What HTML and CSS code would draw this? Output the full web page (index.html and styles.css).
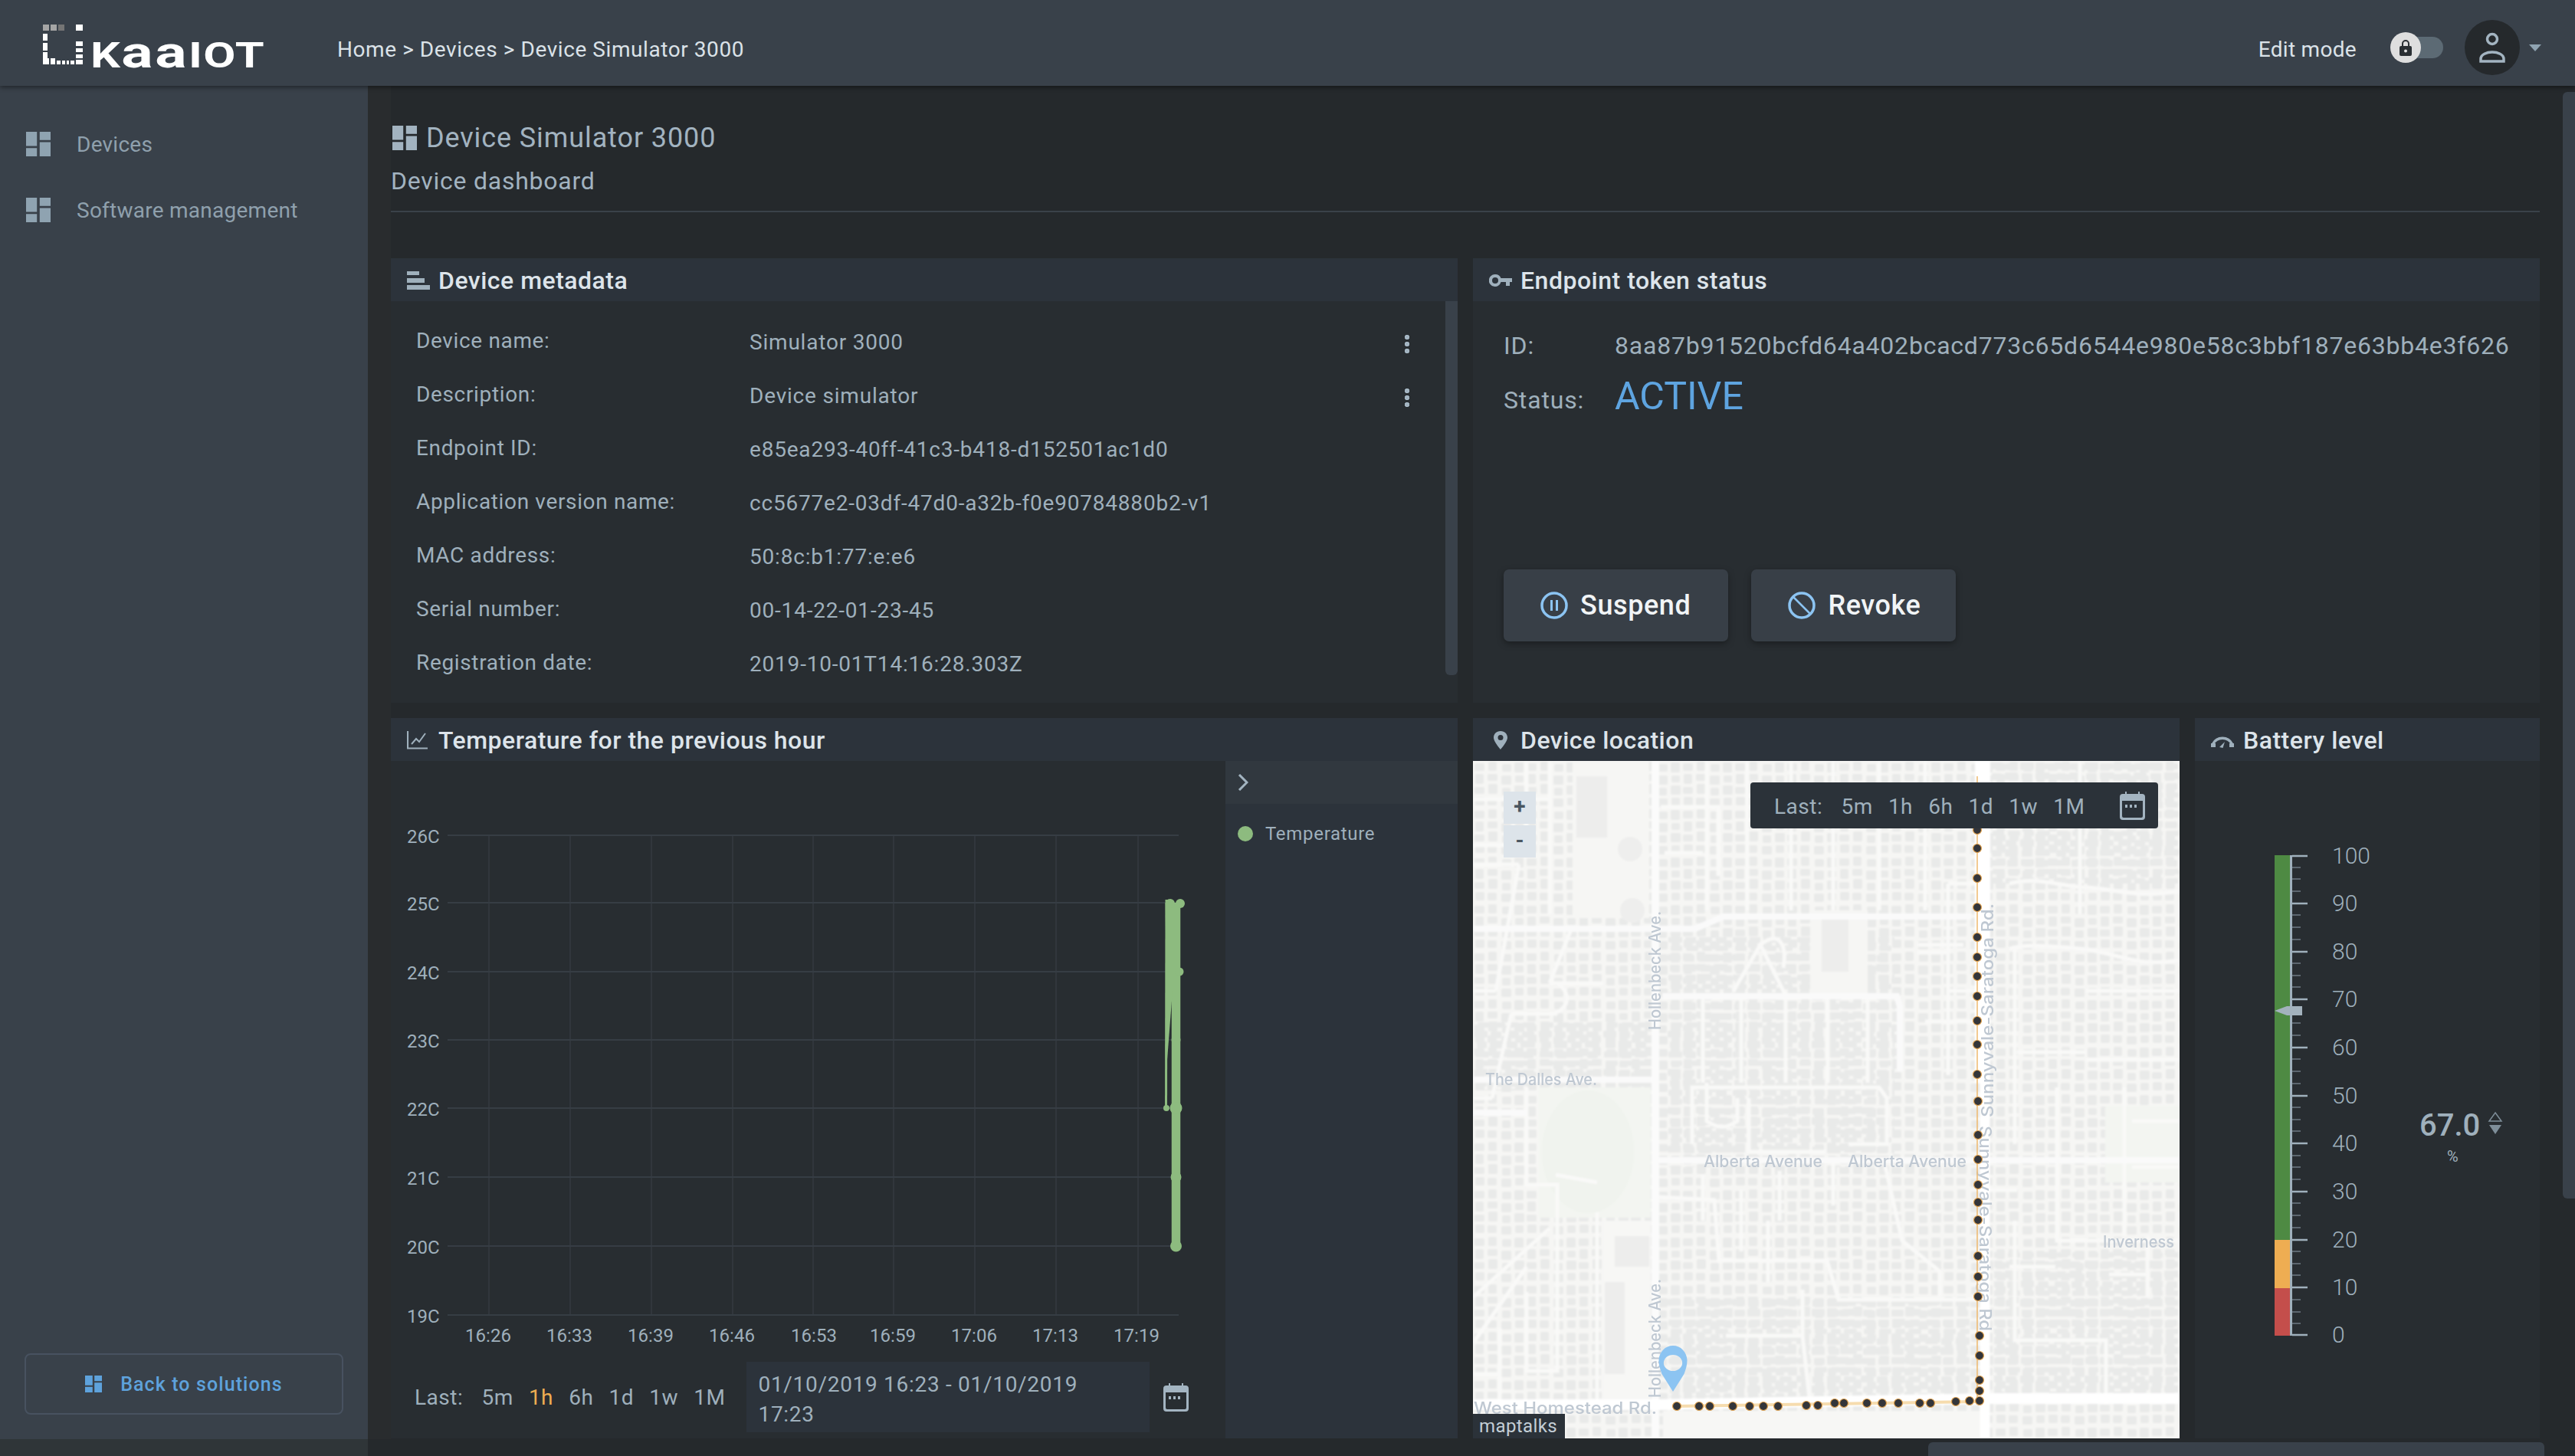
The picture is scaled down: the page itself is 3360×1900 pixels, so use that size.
FILE: index.html
```html
<!DOCTYPE html>
<html lang="en">
<head>
<meta charset="utf-8">
<title>Device Simulator 3000</title>
<link rel="stylesheet" href="styles.css">
</head>
<body>
<svg class="defs" width="0" height="0" aria-hidden="true">
  <symbol id="i-dash" viewBox="3 3 18 18"><path d="M3 13.4h8V3H3zm0 7.6h8v-6H3zm10 0h8V10.6h-8zM13 3v6h8V3z"/></symbol>
  <symbol id="i-cal" viewBox="0 0 33 37"><path fill-rule="evenodd" d="M4 3h3V0h2v3h15V0h2v3h3a4 4 0 0 1 4 4v26a4 4 0 0 1-4 4H4a4 4 0 0 1-4-4V7a4 4 0 0 1 4-4zM3 12v20a2 2 0 0 0 2 2h23a2 2 0 0 0 2-2V12zm4 5h3v4H7zm6 0h3v4h-3zm6 0h3v4h-3z"/></symbol>
</svg>

<header class="topbar">
  <div class="logo">
    <svg class="logo-mark" viewBox="0 0 52 52" width="52" height="52">
      <g fill="#a5a5a5"><rect x="0" y="0" width="8" height="8"/><rect x="10" y="0" width="8" height="8"/><rect x="20" y="0" width="8" height="8" fill="#757575"/></g>
      <g fill="#fff"><rect x="43" y="0" width="9" height="8"/><rect x="0" y="12" width="6" height="9"/><rect x="0" y="24" width="6" height="10"/><rect x="0" y="36" width="6" height="8"/><rect x="0" y="44" width="8" height="8"/><rect x="10" y="44" width="6" height="8"/><rect x="18" y="47" width="5" height="5"/><rect x="25" y="47" width="4" height="5"/><rect x="31" y="47" width="3" height="5"/><rect x="36" y="47" width="5" height="5"/><rect x="43" y="22" width="9" height="6"/><rect x="43" y="31" width="9" height="5"/><rect x="43" y="39" width="9" height="5"/><rect x="43" y="46" width="9" height="6"/></g>
    </svg>
    <span class="logo-word"><b>K</b><i>aa</i><b>IOT</b></span>
  </div>
  <nav class="crumbs">Home &gt; Devices &gt; Device Simulator 3000</nav>
  <div class="top-right">
    <span class="edit-label">Edit mode</span>
    <span class="toggle">
      <span class="knob"><svg viewBox="0 0 16 21" width="16" height="21"><path fill="#2a2f33" fill-rule="evenodd" d="M3 8V5a5 5 0 0 1 10 0v3h1a2 2 0 0 1 2 2v9a2 2 0 0 1-2 2H2a2 2 0 0 1-2-2v-9a2 2 0 0 1 2-2zm2 0h6V5a3 3 0 0 0-6 0zm3 4.500a2 2 0 1 0 0 4 2 2 0 0 0 0-4z"/></svg></span>
    </span>
    <span class="avatar"><svg viewBox="0 0 36 40" width="36" height="40"><circle cx="18" cy="9" r="6.500" fill="none" stroke="#a3b4c1" stroke-width="3.500"/><path d="M3 38v-3c0-6 8-9 15-9s15 3 15 9v3z" fill="none" stroke="#a3b4c1" stroke-width="3.500"/></svg></span>
    <span class="caret"></span>
  </div>
</header>

<div class="shell">
  <aside class="sidebar">
    <div class="nav">
      <a class="nav-item"><svg class="nav-icon"><use href="#i-dash"/></svg>Devices</a>
      <a class="nav-item"><svg class="nav-icon"><use href="#i-dash"/></svg>Software management</a>
    </div>
    <a class="back"><svg class="back-icon"><use href="#i-dash"/></svg>Back to solutions</a>
  </aside>

  <main class="main">
    <div class="page-head">
      <h1 class="page-title"><svg class="title-icon"><use href="#i-dash"/></svg>Device Simulator 3000</h1>
      <h2 class="page-sub">Device dashboard</h2>
    </div>

    <div class="grid">
      <section class="panel">
        <div class="panel-head">
          <svg class="ph-icon" viewBox="0 0 30 24" width="30" height="24"><path d="M0 0h16v5H0zM0 9h23v6H0zM0 18h30v6H0z"/></svg>
          Device metadata
        </div>
        <div class="panel-body meta">
          <div class="meta-row"><span class="meta-key">Device name:</span><span class="meta-val">Simulator 3000</span><span class="kebab"></span></div>
          <div class="meta-row"><span class="meta-key">Description:</span><span class="meta-val">Device simulator</span><span class="kebab"></span></div>
          <div class="meta-row"><span class="meta-key">Endpoint ID:</span><span class="meta-val">e85ea293-40ff-41c3-b418-d152501ac1d0</span></div>
          <div class="meta-row"><span class="meta-key">Application version name:</span><span class="meta-val">cc5677e2-03df-47d0-a32b-f0e90784880b2-v1</span></div>
          <div class="meta-row"><span class="meta-key">MAC address:</span><span class="meta-val">50:8c:b1:77:e:e6</span></div>
          <div class="meta-row"><span class="meta-key">Serial number:</span><span class="meta-val">00-14-22-01-23-45</span></div>
          <div class="meta-row"><span class="meta-key">Registration date:</span><span class="meta-val">2019-10-01T14:16:28.303Z</span></div>
          <span class="meta-scroll"></span>
        </div>
      </section>

      <section class="panel">
        <div class="panel-head">
          <svg class="ph-icon" viewBox="0 0 30 16" width="30" height="16"><path fill-rule="evenodd" d="M8 0a8 8 0 0 1 7.500 5H30v5h-3v5h-5v-5h-6.500A8 8 0 1 1 8 0zm0 4a4 4 0 1 0 0 8 4 4 0 0 0 0-8z"/></svg>
          Endpoint token status
        </div>
        <div class="panel-body token">
          <div class="token-row"><span class="token-key">ID:</span><span class="token-id">8aa87b91520bcfd64a402bcacd773c65d6544e980e58c3bbf187e63bb4e3f626</span></div>
          <div class="token-row status"><span class="token-key">Status:</span><span class="token-state">ACTIVE</span></div>
          <div class="actions">
            <button class="action suspend">
              <svg viewBox="0 0 36 36" width="36" height="36"><circle cx="18" cy="18" r="16" fill="none" stroke="#8cc4f2" stroke-width="3.500"/><path d="M13 11h3v14h-3zM20 11h3v14h-3z" fill="#8cc4f2"/></svg>
              Suspend
            </button>
            <button class="action revoke">
              <svg viewBox="0 0 36 36" width="36" height="36"><circle cx="18" cy="18" r="16" fill="none" stroke="#8cc4f2" stroke-width="3.500"/><path d="M7 7l22 22" stroke="#8cc4f2" stroke-width="2.500"/></svg>
              Revoke
            </button>
          </div>
        </div>
      </section>

      <section class="panel">
        <div class="panel-head">
          <svg class="ph-icon chart-ic" viewBox="0 0 27 24" width="27" height="24"><path d="M1 0v22.500h26" fill="none" stroke="#9fb0bc" stroke-width="2.200"/><path d="M6 17l6-7 4 4 8-11" fill="none" stroke="#9fb0bc" stroke-width="2"/></svg>
          Temperature for the previous hour
        </div>
        <div class="panel-body chart-body">
          <div class="chart-col">
            <svg class="chart" viewBox="0 0 1089 784" width="1089" height="784">
              <g class="grid-v">
                <path d="M128 97V723M234 97V723M340 97V723M446 97V723M551 97V723M656 97V723M762 97V723M868 97V723M975 97V723"/>
              </g>
              <g class="grid-h">
                <path d="M74 97H1028M74 185H1028M74 275H1028M74 364H1028M74 453H1028M74 543H1028M74 633H1028M74 723H1028"/>
              </g>
              <g class="ylab">
                <text x="21" y="107">26C</text><text x="21" y="195">25C</text><text x="21" y="285">24C</text><text x="21" y="374">23C</text><text x="21" y="463">22C</text><text x="21" y="553">21C</text><text x="21" y="643">20C</text><text x="21" y="733">19C</text>
              </g>
              <g class="xlab">
                <text x="127" y="758">16:26</text><text x="233" y="758">16:33</text><text x="339" y="758">16:39</text><text x="445" y="758">16:46</text><text x="552" y="758">16:53</text><text x="655" y="758">16:59</text><text x="761" y="758">17:06</text><text x="867" y="758">17:13</text><text x="973" y="758">17:19</text>
              </g>
              <g class="series">
                <path class="s-thin" d="M1012 185L1011.500 453"/>
                <path class="s-main" d="M1024.500 185V633"/>
                <path class="s-wedge" d="M1010.500 181H1020V300L1013 390z"/>
                <circle cx="1012" cy="453" r="4"/><circle cx="1024.500" cy="453" r="8"/><circle cx="1029" cy="275" r="5.500"/><circle cx="1024.500" cy="364" r="6"/><circle cx="1024.500" cy="543" r="7"/><circle cx="1024.500" cy="633" r="7.500"/><circle cx="1030" cy="186" r="6"/><circle cx="1017" cy="186" r="6"/>
              </g>
            </svg>
            <div class="chart-foot">
              <div class="range">
                <span class="range-label">Last:</span><span>5m</span><span class="on">1h</span><span>6h</span><span>1d</span><span>1w</span><span>1M</span>
              </div>
              <div class="date-box">01/10/2019 16:23 - 01/10/2019 17:23</div>
              <svg class="cal"><use href="#i-cal"/></svg>
            </div>
          </div>
          <div class="legend">
            <div class="legend-head"><svg viewBox="0 0 14 22" width="14" height="22"><path d="M2 1l10 10L2 21" fill="none" stroke="#a3b4c1" stroke-width="3"/></svg></div>
            <div class="legend-item"><span class="legend-dot"></span>Temperature</div>
          </div>
        </div>
      </section>

      <div class="row-split">
        <section class="panel">
          <div class="panel-head">
            <svg class="ph-icon pin" viewBox="0 0 20 24" width="20" height="24"><path fill-rule="evenodd" d="M10 0c5.500 0 9 4 9 8.500C19 14 10 24 10 24S1 14 1 8.500C1 4 4.500 0 10 0zm0 5a3.500 3.500 0 1 0 0 7 3.500 3.500 0 0 0 0-7z"/></svg>
            Device location
          </div>
          <div class="map">
            <svg class="map-art" viewBox="0 0 922 884" width="922" height="884">
              <defs>
                <pattern id="hv" width="68" height="62" patternUnits="userSpaceOnUse">
                  <rect x="2" y="3" width="13" height="10" rx="2"/><rect x="3" y="17" width="11" height="13" rx="2"/><rect x="2" y="34" width="13" height="9" rx="2"/><rect x="3" y="47" width="12" height="11" rx="2"/>
                  <rect x="20" y="1" width="11" height="12" rx="2"/><rect x="19" y="17" width="13" height="9" rx="2"/><rect x="20" y="30" width="12" height="13" rx="2"/><rect x="19" y="48" width="12" height="10" rx="2"/>
                  <rect x="38" y="4" width="12" height="10" rx="2"/><rect x="37" y="19" width="13" height="12" rx="2"/><rect x="38" y="35" width="11" height="10" rx="2"/><rect x="37" y="49" width="13" height="11" rx="2"/>
                  <rect x="54" y="2" width="12" height="13" rx="2"/><rect x="55" y="19" width="11" height="9" rx="2"/><rect x="54" y="32" width="13" height="12" rx="2"/><rect x="55" y="48" width="11" height="10" rx="2"/>
                </pattern>
                <pattern id="hh" width="84" height="50" patternUnits="userSpaceOnUse">
                  <rect x="2" y="2" width="17" height="9" rx="2"/><rect x="23" y="3" width="14" height="9" rx="2"/><rect x="42" y="2" width="18" height="10" rx="2"/><rect x="64" y="3" width="16" height="8" rx="2"/>
                  <rect x="5" y="16" width="13" height="9" rx="2"/><rect x="22" y="15" width="17" height="10" rx="2"/><rect x="44" y="16" width="14" height="9" rx="2"/><rect x="62" y="15" width="19" height="9" rx="2"/>
                  <rect x="3" y="29" width="18" height="8" rx="2"/><rect x="25" y="29" width="14" height="9" rx="2"/><rect x="43" y="28" width="17" height="9" rx="2"/><rect x="65" y="29" width="14" height="9" rx="2"/>
                  <rect x="6" y="41" width="15" height="7" rx="2"/><rect x="26" y="41" width="16" height="7" rx="2"/><rect x="47" y="41" width="13" height="7" rx="2"/><rect x="64" y="41" width="17" height="7" rx="2"/>
                </pattern>
                <filter id="soft" x="0" y="0" width="100%" height="100%"><feGaussianBlur stdDeviation="1.100"/></filter>
                <filter id="soft-text" x="-5%" y="-20%" width="110%" height="140%"><feGaussianBlur stdDeviation="0.400"/></filter>
              </defs>
              <g filter="url(#soft)">
                <rect width="922" height="884" fill="#f6f6f4"/>
                <rect width="922" height="884" class="fill-hv"/>
                <rect x="250" y="230" width="300" height="300" class="fill-hh"/>
                <rect x="670" y="0" width="252" height="160" class="fill-hh"/>
                <rect x="0" y="340" width="230" height="90" class="fill-hh"/>
                <rect x="250" y="700" width="400" height="130" class="fill-hh"/>
                <rect x="680" y="640" width="240" height="190" class="fill-hh"/>
                <!-- open areas -->
                <rect x="130" y="0" width="100" height="205" fill="#f6f6f4"/>
                <rect x="135" y="20" width="40" height="80" fill="#ededec"/>
                <circle cx="205" cy="115" r="16" fill="#eeeeed"/><circle cx="208" cy="195" r="16" fill="#eeeeed"/>
                <rect x="86" y="426" width="146" height="170" fill="#f3f5f1"/>
                <ellipse cx="150" cy="510" rx="60" ry="80" fill="#f0f3ee"/>
                <rect x="170" y="600" width="62" height="240" fill="#f7f7f5"/>
                <rect x="172" y="680" width="26" height="120" fill="#ededec"/>
                <rect x="185" y="620" width="45" height="40" fill="#ededec"/>
                <rect x="440" y="195" width="75" height="110" fill="#f6f6f4"/>
                <rect x="455" y="205" width="35" height="70" fill="#ededec"/>
                <rect x="825" y="450" width="97" height="100" fill="#f3f5f1"/>
                <rect x="248" y="848" width="420" height="36" fill="#f7f7f5"/>
                <!-- minor roads -->
                <g class="road">
                  <path d="M0 50H100M100 0V200M70 0V110M0 110H70"/>
                  <path d="M305 0V195M358 0V195M415 0V195M470 0V195M530 0V195M590 0V195"/>
                  <path d="M245 60H320V150M300 120H250"/>
                  <path d="M620 160H665M620 160V410M620 300H665M620 250H580M580 240H640M590 340H660"/>
                  <path d="M792 0V200M700 160C740 150 770 165 800 165S860 180 922 170"/>
                  <path d="M700 245C715 240 740 240 792 245S860 270 922 260M707 245V500"/>
                  <path d="M800 300H922M800 390H922M710 380H800"/>
                  <path d="M0 135H60M60 135L30 300M30 300H0M100 290L130 215M100 290H170"/>
                  <path d="M50 330H110M50 330L25 440M25 440H0M105 330C130 320 125 300 110 290"/>
                  <path d="M300 307V420M350 307V420M408 307V420M463 307V420M515 307V420"/>
                  <path d="M340 300L375 240L410 310M375 240C400 220 410 240 405 270"/>
                  <path d="M305 420V470C320 480 330 480 345 470V440"/>
                  <path d="M70 426V553H110V796H70V693M162 589V836M108 540L162 550M0 700L100 610M0 760L70 660"/>
                  <path d="M241 569L315 573L321 652H462L477 703H658"/>
                  <path d="M538 529L560 626L609 666V699"/>
                  <path d="M286 500V426H530L540 440V500H490M360 440V510H460"/>
                  <path d="M470 520V580M300 540V600M400 535V600"/>
                  <path d="M330 750H430V690M385 680V600M430 750L440 840M350 560V640"/>
                  <path d="M707 600V756H826V840M762 426V626H922M850 426V620M660 560H710M860 530H922M860 470H922"/>
                  <path d="M700 660H760M830 670H880M880 620V700"/>
                  <path d="M35 740V840M35 840H162M0 800H35"/>
                </g>
                <!-- collectors -->
                <g class="road2">
                  <path d="M0 219H254L290 219L327 203H650"/>
                  <path d="M247 307H553L557 320V405"/>
                  <path d="M0 416H238"/>
                  <path d="M238 521H665M665 521H922"/>
                  <path d="M0 459H70"/>
                </g>
                <path class="road3" d="M238 0V884"/>
                <path class="road4a" d="M665 0V420"/>
                <path class="road4b" d="M668 420V884"/>
                <path class="road5" d="M0 840H240L680 832H922"/>
              </g>
              <g class="maplabel" filter="url(#soft-text)">
                <text transform="translate(245 351) rotate(-90)" textLength="155" lengthAdjust="spacingAndGlyphs">Hollenbeck Ave.</text>
                <text transform="translate(245 831) rotate(-90)" textLength="155" lengthAdjust="spacingAndGlyphs">Hollenbeck Ave.</text>
                <text transform="translate(679 465) rotate(-90)" textLength="279" lengthAdjust="spacingAndGlyphs">Sunnyvale-Saratoga Rd.</text>
                <text transform="translate(661 476) rotate(90)" textLength="268" lengthAdjust="spacingAndGlyphs">Sunnyvale-Saratoga Rd</text>
                <text x="16" y="423" textLength="146" lengthAdjust="spacingAndGlyphs">The Dalles Ave.</text>
                <text x="301" y="530" textLength="155" lengthAdjust="spacingAndGlyphs">Alberta Avenue</text>
                <text x="489" y="530" textLength="155" lengthAdjust="spacingAndGlyphs">Alberta Avenue</text>
                <text x="822" y="635" textLength="93" lengthAdjust="spacingAndGlyphs">Inverness</text>
                <text x="1" y="852" textLength="239" lengthAdjust="spacingAndGlyphs">West Homestead Rd.</text>
              </g>
              <path class="route" d="M658 20V838"/>
              <path class="route-low" d="M658 836L266 842"/>
              <g class="dots">
                <circle cx="658" cy="90" r="5.500"/><circle cx="658" cy="114" r="5.500"/><circle cx="658" cy="153" r="5.500"/><circle cx="658" cy="191" r="5.500"/><circle cx="658" cy="230" r="5.500"/><circle cx="658" cy="256" r="5.500"/><circle cx="658" cy="281" r="5.500"/><circle cx="658" cy="307" r="5.500"/><circle cx="658" cy="339" r="5.500"/><circle cx="658" cy="370" r="5.500"/><circle cx="658" cy="409" r="5.500"/>
                <circle cx="659" cy="444" r="5.500"/><circle cx="659" cy="488" r="5.500"/><circle cx="659" cy="520" r="5.500"/><circle cx="659" cy="553" r="5.500"/><circle cx="659" cy="576" r="5.500"/><circle cx="659" cy="599" r="5.500"/><circle cx="659" cy="646" r="5.500"/><circle cx="659" cy="673" r="5.500"/><circle cx="659" cy="699" r="5.500"/><circle cx="661" cy="750" r="5.500"/><circle cx="661" cy="776" r="5.500"/><circle cx="661" cy="808" r="5.500"/><circle cx="661" cy="822" r="5.500"/><circle cx="661" cy="835" r="5.500"/>
                <circle cx="648" cy="835" r="5.500"/><circle cx="630" cy="836" r="5.500"/><circle cx="597" cy="838" r="5.500"/><circle cx="583" cy="838" r="5.500"/><circle cx="555" cy="838" r="5.500"/><circle cx="534" cy="838" r="5.500"/><circle cx="514" cy="838" r="5.500"/><circle cx="484" cy="838" r="5.500"/><circle cx="472" cy="838" r="5.500"/><circle cx="450" cy="841" r="5.500"/><circle cx="435" cy="841" r="5.500"/><circle cx="398" cy="842" r="5.500"/><circle cx="379" cy="842" r="5.500"/><circle cx="361" cy="842" r="5.500"/><circle cx="339" cy="842" r="5.500"/><circle cx="309" cy="842" r="5.500"/><circle cx="295" cy="842" r="5.500"/><circle cx="266" cy="842" r="5.500"/>
              </g>
              <path class="marker" fill-rule="evenodd" d="M261 763c10 0 18 8 18.500 19 0 7-2 12-4 18L261 823l-14.500-23c-2-6-4-11-4-18 .5-11 8.500-19 18.500-19zm0 12a11 9.500 0 1 0 0 21 11 9.500 0 0 0 0-21z"/>
            </svg>
            <div class="zoomer"><span class="zoom-btn">+</span><span class="zoom-btn">-</span></div>
            <div class="map-range">
              <div class="range">
                <span class="range-label">Last:</span><span>5m</span><span>1h</span><span>6h</span><span>1d</span><span>1w</span><span>1M</span>
              </div>
              <svg class="cal"><use href="#i-cal"/></svg>
            </div>
            <div class="attrib">maptalks</div>
          </div>
        </section>

        <section class="panel">
          <div class="panel-head battery-head">
            <svg class="ph-icon" viewBox="0 0 32 22" width="32" height="22"><path d="M3.500 16A14 14 0 0 1 28.500 16" fill="none" stroke="#9fb0bc" stroke-width="3.500"/><path d="M1 15h6v5H1zM25 15h6v5h-6zM12 20l7-7-2.500 8z"/></svg>
            Battery level
          </div>
          <div class="panel-body">
            <svg class="gauge" viewBox="0 0 450 884" width="450" height="884">
              <rect x="104" y="123" width="20" height="502" fill="#4e8a43"/>
              <rect x="104" y="625" width="20" height="63" fill="#eead52"/>
              <rect x="104" y="688" width="20" height="62" fill="#c44e4b"/>
              <rect x="124" y="123" width="3" height="627" fill="#9fb0bc"/>
              <path class="minor" d="M127 139h11M127 154h11M127 170h11M127 201h11M127 217h11M127 233h11M127 264h11M127 280h11M127 295h11M127 327h11M127 342h11M127 358h11M127 389h11M127 405h11M127 421h11M127 452h11M127 468h11M127 483h11M127 515h11M127 530h11M127 546h11M127 577h11M127 593h11M127 609h11M127 640h11M127 656h11M127 671h11M127 703h11M127 719h11M127 734h11"/>
              <path class="major" d="M127 124h20M127 186h20M127 249h20M127 311h20M127 374h20M127 437h20M127 499h20M127 562h20M127 625h20M127 687h20M127 749h20"/>
              <g class="scale">
                <text x="179" y="134">100</text><text x="179" y="196">90</text><text x="179" y="259">80</text><text x="179" y="321">70</text><text x="179" y="384">60</text><text x="179" y="447">50</text><text x="179" y="509">40</text><text x="179" y="572">30</text><text x="179" y="635">20</text><text x="179" y="697">10</text><text x="179" y="759">0</text>
              </g>
              <path class="pointer" d="M104 326L120 320H140V332H120z"/>
              <text class="g-val" x="293" y="489">67.0</text>
              <text class="g-unit" x="329" y="523">%</text>
              <path class="g-up" d="M392 459L400 470H384z"/>
              <path class="g-down" d="M384 475H400L392 487z"/>
            </svg>
          </div>
        </section>
      </div>
    </div>
  </main>
</div>
<footer class="bottom"><span class="bottom-side"></span></footer>

<span class="scroll-v"></span>
<span class="scroll-h"></span>
</body>
</html>
```
FILE: styles.css
```css
* { box-sizing: border-box; }
html, body { margin: 0; height: 1900px; overflow: hidden; }
body {
  position: relative;
  width: 3360px;
  background: #25292c;
  font-family: Roboto, "Liberation Sans", sans-serif;
  color: #9fb0bc;
  font-size: 26px;
}
.defs { position: absolute; }

.topbar {
  position: relative;
  z-index: 2;
  height: 112px;
  display: flex;
  align-items: center;
  padding: 12px 44px 0 56px;
  background: #39414a;
  box-shadow: 0 2px 6px rgba(0,0,0,.45);
}
.logo { display: flex; align-items: flex-end; gap: 10px; width: 384px; height: 52px; margin-top: -8px; }
.logo-mark { flex: none; }
.logo-word { display: flex; align-items: baseline; color: #fff; line-height: 30px; height: 30px; margin-bottom: 1px; letter-spacing: 1px; transform: scaleX(1.33); transform-origin: left center; }
.logo-word b { font-weight: 700; font-size: 46px; }
.logo-word i { font-style: normal; font-weight: 700; font-size: 58px; letter-spacing: 2px; }
.crumbs { font-size: 28px; letter-spacing: .57px; color: #dbe2e8; padding-top: 5px; }
.top-right { margin-left: auto; display: flex; align-items: center; }
.edit-label { font-size: 28px; letter-spacing: .3px; color: #dbe2e8; margin-right: 45px; padding-top: 5px; }
.toggle { position: relative; display: block; width: 68px; height: 28px; border-radius: 14px; background: #5c6a74; margin-right: 28px; }
.knob { position: absolute; left: -1px; top: -6px; width: 40px; height: 40px; border-radius: 50%; background: #dedede; display: flex; align-items: center; justify-content: center; }
.avatar { width: 72px; height: 72px; border-radius: 50%; background: #25292c; display: flex; align-items: center; justify-content: center; margin-right: 12px; }
.caret { width: 0; height: 0; border-left: 8px solid transparent; border-right: 8px solid transparent; border-top: 9px solid #8fa3b1; }

.shell { display: flex; height: 1766px; }
.sidebar { width: 480px; flex: none; background: #39414a; display: flex; flex-direction: column; justify-content: space-between; padding: 32px 0 32px 0; }
.nav { display: flex; flex-direction: column; gap: 22px; padding-top: 12px; }
.nav-item { display: flex; align-items: center; height: 64px; padding-left: 34px; font-size: 28px; letter-spacing: .25px; color: #8fa0ad; }
.nav-icon { width: 32px; height: 32px; fill: #8fa3b1; margin-right: 34px; }
.back { display: flex; align-items: center; justify-content: center; width: 416px; height: 80px; margin-left: 32px; border: 2px solid #485260; border-radius: 8px; color: #5ea2dc; font-size: 25px; font-weight: 500; letter-spacing: 1.1px; }
.back-icon { width: 22px; height: 22px; fill: #5ea2dc; margin-right: 24px; }

.main { flex: 1; padding: 0 46px 0 30px; background: linear-gradient(90deg, #292c2e 30px, #25292c 30px); }
.page-head { height: 165px; border-bottom: 2px solid #3a4249; margin-bottom: 60px; }
.page-title { margin: 0; padding-top: 48px; display: flex; align-items: center; font-size: 36px; font-weight: 400; line-height: 40px; letter-spacing: .9px; color: #a2b3c0; margin-left: 2px; }
.title-icon { width: 32px; height: 32px; fill: #a2b3c0; margin-right: 12px; }
.page-sub { margin: 16px 0 0; font-size: 32px; font-weight: 400; line-height: 40px; letter-spacing: .75px; color: #a2b3c0; }

.grid { display: grid; grid-template-columns: 1392px 1392px; grid-template-rows: 580px 940px; gap: 20px; }
.row-split { display: grid; grid-template-columns: 922px 450px; gap: 20px; }
.panel { display: flex; flex-direction: column; background: #282d31; min-width: 0; }
.panel-head { flex: none; height: 56px; display: flex; align-items: center; padding: 1px 0 0 21px; background: #2c333b; color: #dde4ea; font-size: 32px; font-weight: 500; letter-spacing: .5px; }
.ph-icon { flex: none; fill: #9fb0bc; margin-right: 11px; }
.ph-icon.chart-ic { margin-right: 14px; }
.ph-icon.pin { margin: 0 16px 0 5px; }
.battery-head { padding-left: 20px; }
.panel-body { position: relative; flex: 1; min-height: 0; }

.meta { padding: 16px 0 0 33px; }
.meta-row { display: grid; grid-template-columns: 435px 1fr 90px; align-items: center; height: 70px; }
.meta-key { font-size: 28px; letter-spacing: .65px; color: #9fb0bc; }
.meta-val { font-size: 28px; letter-spacing: .8px; color: #9fb0bc; padding-top: 5px; }
.kebab { width: 6px; height: 24px; margin: 10px 0 0 21px; background: radial-gradient(circle at 3px 3px, #a3b4c1 3px, transparent 3.400px) 0 0 / 6px 9px repeat-y; }
.meta-scroll { position: absolute; right: 0; top: 0; width: 16px; height: 488px; background: #39414a; border-radius: 0 0 6px 6px; }

.token { display: flex; flex-direction: column; padding: 34px 0 80px 40px; }
.token-row { display: grid; grid-template-columns: 145px 1fr; align-items: baseline; line-height: 48px; font-size: 32px; }
.token-key { font-size: 32px; letter-spacing: .85px; }
.token-id { font-size: 32px; letter-spacing: .78px; }
.status { margin-top: 14px; }
.status .token-key { align-self: end; margin-bottom: -1px; }
.token-state { font-size: 50px; color: #5ea4e0; line-height: 56px; }
.actions { margin-top: auto; display: flex; gap: 30px; }
.action { display: flex; align-items: center; height: 94px; padding: 0 49px 0 48px; border: 0; border-radius: 7px; background: #383f47; color: #f1f4f6; font: 500 36px Roboto, sans-serif; letter-spacing: .6px; box-shadow: 0 3px 8px rgba(0,0,0,.35); }
.action svg { margin-right: 16px; }
.action.revoke { padding-right: 46px; }

.chart-body { display: flex; }
.chart-col { width: 1089px; display: flex; flex-direction: column; }
.chart { display: block; }
.grid-h path { stroke: #363d44; stroke-width: 2; fill: none; }
.grid-v path { stroke: #343a40; stroke-width: 1.500; fill: none; }
.ylab text, .xlab text { font-size: 24px; fill: #9fb0bc; }
.xlab text { text-anchor: middle; }
.series path { fill: none; stroke: #8dbb7f; }
.series circle { fill: #8dbb7f; }
.series .s-thin { stroke-width: 3; }
.series .s-main { stroke-width: 11.500; }
.series .s-wedge { fill: #8dbb7f; stroke: none; }
.chart-foot { flex: 1; display: flex; align-items: center; padding: 0 0 8px 31px; }
.range { display: flex; gap: 20.2px; font-size: 28px; letter-spacing: .5px; color: #9fb0bc; }
.range-label { margin-right: 4px; }
.range .on { color: #eead52; }
.date-box { width: 526px; height: 92px; margin-left: 28px; padding: 10px 15px; background: #2c333b; font-size: 28px; line-height: 39px; letter-spacing: .7px; color: #9fb0bc; }
.cal { width: 33px; height: 37px; margin-left: 18px; fill: #a3b4c1; flex: none; }
.legend { flex: 1; background: #2c333b; }
.legend-head { height: 56px; background: #31383f; display: flex; align-items: center; padding-left: 16px; }
.legend-item { display: flex; align-items: center; margin-top: 25px; padding-left: 16px; font-size: 24px; letter-spacing: .7px; color: #9fb0bc; }
.legend-dot { width: 20px; height: 20px; border-radius: 50%; background: #8dbb7f; margin-right: 16px; }

.map { position: relative; flex: 1; overflow: hidden; background: #f5f5f3; }
.map-art { display: block; }
.fill-hv { fill: url(#hv); }
.fill-hh { fill: url(#hh); }
#hv rect, #hh rect { fill: #e9eae9; }
.road path { fill: none; stroke: #f9f9f8; stroke-width: 5; }
.road2 path { fill: none; stroke: #fafafa; stroke-width: 8; }
.road3 { fill: none; stroke: #fbfbfb; stroke-width: 10; }
.road4a { fill: none; stroke: #fff; stroke-width: 20; }
.road4b { fill: none; stroke: #fff; stroke-width: 13; }
.road5 { fill: none; stroke: #fff; stroke-width: 14; }
.maplabel text { font-family: Inter, "Liberation Sans", sans-serif; font-size: 21px; font-weight: 500; fill: #bfc8d2; }
.route { fill: none; stroke: #eeb96d; stroke-width: 1.500; }
.route-low { fill: none; stroke: #f6dcae; stroke-width: 4; }
.dots circle { fill: #33353a; stroke: #e4a44f; stroke-width: 1.200; }
.marker { fill: #8cc4f2; }
.zoomer { position: absolute; left: 40px; top: 40px; display: flex; flex-direction: column; gap: 2px; }
.zoom-btn { width: 42px; height: 42px; background: #dde4ea; color: #4a5660; font-size: 28px; font-weight: 700; line-height: 40px; text-align: center; }
.map-range { position: absolute; left: 362px; top: 28px; width: 532px; height: 60px; display: flex; align-items: center; justify-content: space-between; padding: 2px 17px 0 31px; background: #2b3239; border-radius: 4px; }
.map-range .cal { margin: -2px 0 0; }
.attrib { position: absolute; left: 0; bottom: 0; width: 120px; height: 32px; background: #2b3239; color: #c3ced6; font-size: 24px; line-height: 32px; padding-left: 8px; letter-spacing: .4px; }

.gauge { display: block; }
.minor { stroke: #6d7a84; stroke-width: 1.500; fill: none; }
.major { stroke: #9fb0bc; stroke-width: 2.500; fill: none; }
.scale text { font-size: 30px; font-weight: 300; fill: #9fb0bc; }
.pointer { fill: #a3b2bd; }
.g-val { font-size: 40px; font-weight: 500; fill: #9fb0bc; }
.g-unit { font-size: 20px; fill: #9fb0bc; }
.g-up { fill: none; stroke: #7e8e99; stroke-width: 1.500; }
.g-down { fill: #7e8e99; }

.bottom { height: 22px; }
.bottom-side { display: block; width: 480px; height: 22px; background: #2f3538; }
.scroll-v { position: absolute; left: 3344px; top: 120px; width: 16px; height: 1444px; background: #39414a; border-radius: 6px 0 0 6px; }
.scroll-h { position: absolute; left: 2516px; top: 1882px; width: 804px; height: 18px; background: #39414a; border-radius: 6px 6px 0 0; }
```
